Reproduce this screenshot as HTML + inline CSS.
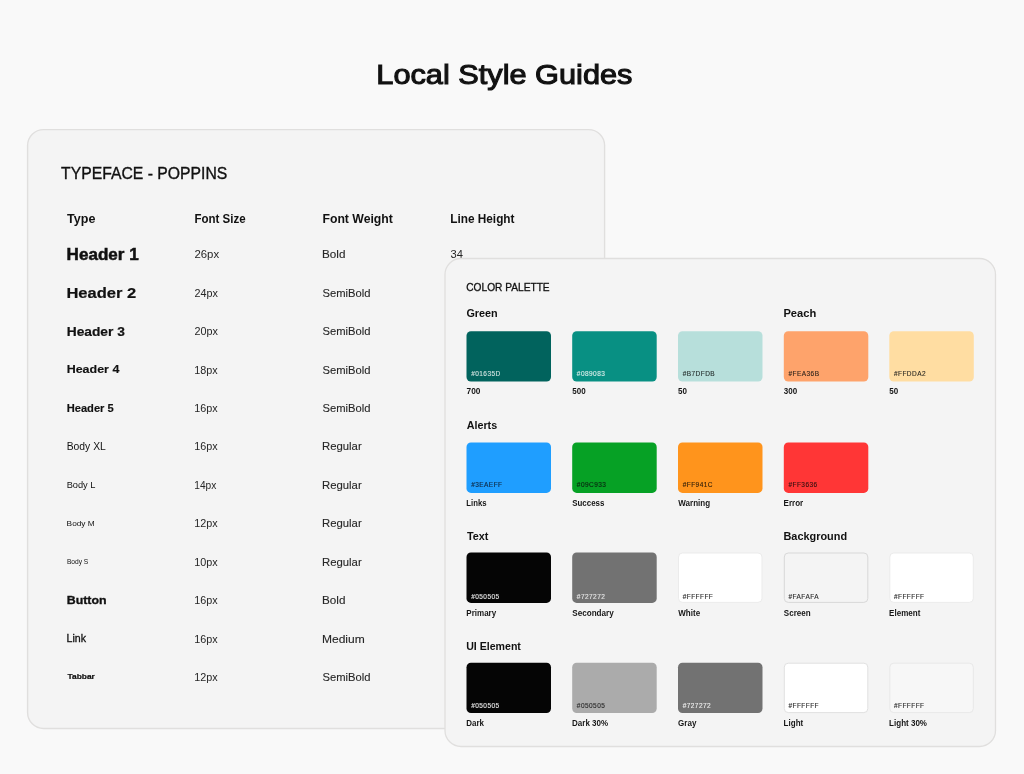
<!DOCTYPE html>
<html><head><meta charset="utf-8"><title>Local Style Guides</title><style>
html,body{margin:0;padding:0;}
body{width:1024px;height:774px;background:#f9f9f9;overflow:hidden;position:relative;}
svg{position:absolute;left:0;top:0;will-change:transform;}
text{font-family:"Liberation Sans",sans-serif;}
</style></head><body>
<svg width="1024" height="774" viewBox="0 0 1024 774">
<rect x="0" y="0" width="1024" height="774" fill="#f9f9f9"/>
<text transform="translate(376.32 83.60) scale(1.0783 1)" font-size="28.5" font-weight="400" fill="#111111" stroke="#111111" stroke-width="1.1">Local Style Guides</text>
<rect x="27.6" y="129.6" width="577" height="598.9" rx="16" fill="#f4f4f4" stroke="#e0dfde" stroke-width="1.4"/>
<text transform="translate(61.03 178.90) scale(0.9675 1)" font-size="16.3" font-weight="400" fill="#111111" stroke="#111111" stroke-width="0.35">TYPEFACE - POPPINS</text>
<text transform="translate(67.04 223.10) scale(1.0453 1)" font-size="12" font-weight="700" fill="#111111">Type</text>
<text transform="translate(194.48 223.20) scale(0.9608 1)" font-size="12" font-weight="700" fill="#111111">Font Size</text>
<text transform="translate(322.43 223.30) scale(1.0212 1)" font-size="12" font-weight="700" fill="#111111">Font Weight</text>
<text transform="translate(450.16 223.30) scale(0.9860 1)" font-size="12" font-weight="700" fill="#111111">Line Height</text>
<text transform="translate(66.62 260.20) scale(1.0284 1)" font-size="16.6" font-weight="700" fill="#111111" stroke="#111111" stroke-width="0.5">Header 1</text>
<text transform="translate(194.46 258.30) scale(1.0742 1)" font-size="10.6" font-weight="400" fill="#262626">26px</text>
<text transform="translate(321.98 258.30) scale(1.0750 1)" font-size="10.9" font-weight="400" fill="#262626" stroke="#262626" stroke-width="0.1">Bold</text>
<text transform="translate(66.43 297.60) scale(1.0740 1)" font-size="15.4" font-weight="700" fill="#111111" stroke="#111111" stroke-width="0.2">Header 2</text>
<text transform="translate(194.49 296.73) scale(1.0189 1)" font-size="10.6" font-weight="400" fill="#262626">24px</text>
<text transform="translate(322.53 296.73) scale(1.0308 1)" font-size="10.9" font-weight="400" fill="#262626" stroke="#262626" stroke-width="0.1">SemiBold</text>
<text transform="translate(66.70 335.60) scale(1.0685 1)" font-size="12.9" font-weight="700" fill="#111111" stroke="#111111" stroke-width="0.2">Header 3</text>
<text transform="translate(194.49 335.16) scale(1.0189 1)" font-size="10.6" font-weight="400" fill="#262626">20px</text>
<text transform="translate(322.53 335.16) scale(1.0308 1)" font-size="10.9" font-weight="400" fill="#262626" stroke="#262626" stroke-width="0.1">SemiBold</text>
<text transform="translate(66.68 373.30) scale(1.0582 1)" font-size="11.8" font-weight="700" fill="#111111" stroke="#111111" stroke-width="0.15">Header 4</text>
<text transform="translate(194.24 373.59) scale(1.0189 1)" font-size="10.6" font-weight="400" fill="#262626">18px</text>
<text transform="translate(322.53 373.59) scale(1.0308 1)" font-size="10.9" font-weight="400" fill="#262626" stroke="#262626" stroke-width="0.1">SemiBold</text>
<text transform="translate(66.69 411.90) scale(1.0503 1)" font-size="10.6" font-weight="700" fill="#111111" stroke="#111111" stroke-width="0.15">Header 5</text>
<text transform="translate(194.24 412.02) scale(1.0189 1)" font-size="10.6" font-weight="400" fill="#262626">16px</text>
<text transform="translate(322.53 412.02) scale(1.0308 1)" font-size="10.9" font-weight="400" fill="#262626" stroke="#262626" stroke-width="0.1">SemiBold</text>
<text transform="translate(66.66 450.30) scale(0.9884 1)" font-size="10.5" font-weight="400" fill="#111111">Body XL</text>
<text transform="translate(194.24 450.45) scale(1.0189 1)" font-size="10.6" font-weight="400" fill="#262626">16px</text>
<text transform="translate(322.01 450.45) scale(1.0405 1)" font-size="10.9" font-weight="400" fill="#262626" stroke="#262626" stroke-width="0.1">Regular</text>
<text transform="translate(66.63 488.10) scale(1.0296 1)" font-size="9.0" font-weight="400" fill="#111111">Body L</text>
<text transform="translate(194.28 488.88) scale(0.9636 1)" font-size="10.6" font-weight="400" fill="#262626">14px</text>
<text transform="translate(322.01 488.88) scale(1.0405 1)" font-size="10.9" font-weight="400" fill="#262626" stroke="#262626" stroke-width="0.1">Regular</text>
<text transform="translate(66.62 526.00) scale(1.0369 1)" font-size="8.0" font-weight="400" fill="#111111">Body M</text>
<text transform="translate(194.24 527.31) scale(1.0189 1)" font-size="10.6" font-weight="400" fill="#262626">12px</text>
<text transform="translate(322.01 527.31) scale(1.0405 1)" font-size="10.9" font-weight="400" fill="#262626" stroke="#262626" stroke-width="0.1">Regular</text>
<text transform="translate(66.90 563.90) scale(0.9928 1)" font-size="6.7" font-weight="400" fill="#111111">Body S</text>
<text transform="translate(194.24 565.74) scale(1.0189 1)" font-size="10.6" font-weight="400" fill="#262626">10px</text>
<text transform="translate(322.01 565.74) scale(1.0405 1)" font-size="10.9" font-weight="400" fill="#262626" stroke="#262626" stroke-width="0.1">Regular</text>
<text transform="translate(66.78 603.90) scale(1.0653 1)" font-size="11.6" font-weight="700" fill="#111111" stroke="#111111" stroke-width="0.35">Button</text>
<text transform="translate(194.24 604.17) scale(1.0189 1)" font-size="10.6" font-weight="400" fill="#262626">16px</text>
<text transform="translate(321.98 604.17) scale(1.0750 1)" font-size="10.9" font-weight="400" fill="#262626" stroke="#262626" stroke-width="0.1">Bold</text>
<text x="66.55" y="642.30" font-size="10.6" font-weight="400" fill="#111111" stroke="#111111" stroke-width="0.3">Link</text>
<text transform="translate(194.24 642.60) scale(1.0189 1)" font-size="10.6" font-weight="400" fill="#262626">16px</text>
<text transform="translate(321.94 642.60) scale(1.1054 1)" font-size="10.9" font-weight="400" fill="#262626" stroke="#262626" stroke-width="0.1">Medium</text>
<text transform="translate(67.50 679.30) scale(1.0500 1)" font-size="8.0" font-weight="700" fill="#111111" stroke="#111111" stroke-width="0.2">Tabbar</text>
<text transform="translate(194.24 681.03) scale(1.0189 1)" font-size="10.6" font-weight="400" fill="#262626">12px</text>
<text transform="translate(322.53 681.03) scale(1.0308 1)" font-size="10.9" font-weight="400" fill="#262626" stroke="#262626" stroke-width="0.1">SemiBold</text>
<text transform="translate(450.47 258.40) scale(1.0545 1)" font-size="10.6" font-weight="400" fill="#262626">34</text>
<rect x="445.0" y="258.5" width="550.5" height="488" rx="16" fill="#f4f4f4" stroke="#e0dfde" stroke-width="1.3"/>
<rect x="466.50" y="331.20" width="84.50" height="50.40" rx="4.5" fill="#01635D"/>
<rect x="572.20" y="331.20" width="84.50" height="50.40" rx="4.5" fill="#089083"/>
<rect x="678.00" y="331.20" width="84.50" height="50.40" rx="4.5" fill="#B7DFDB"/>
<rect x="783.80" y="331.20" width="84.50" height="50.40" rx="4.5" fill="#FEA36B"/>
<rect x="889.30" y="331.20" width="84.50" height="50.40" rx="4.5" fill="#FFDDA2"/>
<rect x="466.50" y="442.50" width="84.50" height="50.40" rx="4.5" fill="#1F9EFF"/>
<rect x="572.20" y="442.50" width="84.50" height="50.40" rx="4.5" fill="#06A125"/>
<rect x="678.00" y="442.50" width="84.50" height="50.40" rx="4.5" fill="#FF941C"/>
<rect x="783.80" y="442.50" width="84.50" height="50.40" rx="4.5" fill="#FF3636"/>
<rect x="466.50" y="552.50" width="84.50" height="50.40" rx="4.5" fill="#050505"/>
<rect x="572.20" y="552.50" width="84.50" height="50.40" rx="4.5" fill="#727272"/>
<rect x="678.50" y="553.00" width="83.50" height="49.40" rx="4.0" fill="#FFFFFF" stroke="#ebebeb" stroke-width="1"/>
<rect x="784.30" y="553.00" width="83.50" height="49.40" rx="4.0" fill="#F4F4F4" stroke="#d8d8d8" stroke-width="1"/>
<rect x="889.80" y="553.00" width="83.50" height="49.40" rx="4.0" fill="#FFFFFF" stroke="#ebebeb" stroke-width="1"/>
<rect x="466.50" y="662.70" width="84.50" height="50.40" rx="4.5" fill="#050505"/>
<rect x="572.20" y="662.70" width="84.50" height="50.40" rx="4.5" fill="#ABABAB"/>
<rect x="678.00" y="662.70" width="84.50" height="50.40" rx="4.5" fill="#727272"/>
<rect x="784.30" y="663.20" width="83.50" height="49.40" rx="4.0" fill="#FFFFFF" stroke="#e0e0e0" stroke-width="1"/>
<rect x="889.80" y="663.20" width="83.50" height="49.40" rx="4.0" fill="#F7F7F7" stroke="#e8e8e8" stroke-width="1"/>
<text transform="translate(466.27 290.80) scale(0.9677 1)" font-size="10.5" font-weight="400" fill="#111111" stroke="#111111" stroke-width="0.3">COLOR PALETTE</text>
<text transform="translate(466.39 317.20) scale(1.0237 1)" font-size="10.6" font-weight="700" fill="#111111">Green</text>
<text transform="translate(783.41 317.20) scale(1.0521 1)" font-size="10.6" font-weight="700" fill="#111111">Peach</text>
<text transform="translate(466.65 428.60) scale(1.0154 1)" font-size="10.6" font-weight="700" fill="#111111">Alerts</text>
<text transform="translate(466.90 539.90) scale(1.0240 1)" font-size="10.6" font-weight="700" fill="#111111">Text</text>
<text transform="translate(783.43 539.90) scale(1.0307 1)" font-size="10.6" font-weight="700" fill="#111111">Background</text>
<text x="466.15" y="650.00" font-size="10.6" font-weight="700" fill="#111111">UI Element</text>
<text x="471.16" y="375.80" font-size="6.5" font-weight="400" fill="#cfe2df" letter-spacing="0.450" stroke="#cfe2df" stroke-width="0.12">#01635D</text>
<text transform="translate(466.55 394.10) scale(1.0154 1)" font-size="8.2" font-weight="700" fill="#161616">700</text>
<text x="576.86" y="375.80" font-size="6.5" font-weight="400" fill="#d6ece8" letter-spacing="0.450" stroke="#d6ece8" stroke-width="0.12">#089083</text>
<text transform="translate(572.26 394.10) scale(0.9780 1)" font-size="8.2" font-weight="700" fill="#161616">500</text>
<text x="682.66" y="375.80" font-size="6.5" font-weight="400" fill="#26302f" letter-spacing="0.450" stroke="#26302f" stroke-width="0.12">#B7DFDB</text>
<text transform="translate(678.06 394.10) scale(0.9780 1)" font-size="8.2" font-weight="700" fill="#161616">50</text>
<text x="788.46" y="375.80" font-size="6.5" font-weight="400" fill="#2e241c" letter-spacing="0.450" stroke="#2e241c" stroke-width="0.12">#FEA36B</text>
<text transform="translate(783.86 394.10) scale(0.9780 1)" font-size="8.2" font-weight="700" fill="#161616">300</text>
<text x="893.96" y="375.80" font-size="6.5" font-weight="400" fill="#2e2b24" letter-spacing="0.450" stroke="#2e2b24" stroke-width="0.12">#FFDDA2</text>
<text transform="translate(889.36 394.10) scale(0.9780 1)" font-size="8.2" font-weight="700" fill="#161616">50</text>
<text x="471.16" y="487.00" font-size="6.5" font-weight="400" fill="#0f2740" letter-spacing="0.450" stroke="#0f2740" stroke-width="0.12">#3EAEFF</text>
<text transform="translate(466.33 505.90) scale(0.9415 1)" font-size="8.2" font-weight="700" fill="#161616">Links</text>
<text x="576.86" y="487.00" font-size="6.5" font-weight="400" fill="#0a2410" letter-spacing="0.450" stroke="#0a2410" stroke-width="0.12">#09C933</text>
<text transform="translate(572.26 505.90) scale(0.9679 1)" font-size="8.2" font-weight="700" fill="#161616">Success</text>
<text x="682.66" y="487.00" font-size="6.5" font-weight="400" fill="#33200a" letter-spacing="0.450" stroke="#33200a" stroke-width="0.12">#FF941C</text>
<text transform="translate(678.30 505.90) scale(0.9780 1)" font-size="8.2" font-weight="700" fill="#161616">Warning</text>
<text x="788.46" y="487.00" font-size="6.5" font-weight="400" fill="#331010" letter-spacing="0.450" stroke="#331010" stroke-width="0.12">#FF3636</text>
<text transform="translate(783.61 505.90) scale(0.9780 1)" font-size="8.2" font-weight="700" fill="#161616">Error</text>
<text x="471.16" y="598.60" font-size="6.5" font-weight="400" fill="#e6e6e6" letter-spacing="0.450" stroke="#e6e6e6" stroke-width="0.12">#050505</text>
<text transform="translate(466.31 615.80) scale(0.9780 1)" font-size="8.2" font-weight="700" fill="#161616">Primary</text>
<text x="576.86" y="598.60" font-size="6.5" font-weight="400" fill="#e6e6e6" letter-spacing="0.450" stroke="#e6e6e6" stroke-width="0.12">#727272</text>
<text transform="translate(572.25 615.80) scale(0.9904 1)" font-size="8.2" font-weight="700" fill="#161616">Secondary</text>
<text x="682.66" y="598.60" font-size="6.5" font-weight="400" fill="#2a2a2a" letter-spacing="0.450" stroke="#2a2a2a" stroke-width="0.12">#FFFFFF</text>
<text transform="translate(678.30 615.80) scale(0.9780 1)" font-size="8.2" font-weight="700" fill="#161616">White</text>
<text x="788.46" y="598.60" font-size="6.5" font-weight="400" fill="#2a2a2a" letter-spacing="0.450" stroke="#2a2a2a" stroke-width="0.12">#FAFAFA</text>
<text transform="translate(783.86 615.80) scale(0.9780 1)" font-size="8.2" font-weight="700" fill="#161616">Screen</text>
<text x="893.96" y="598.60" font-size="6.5" font-weight="400" fill="#2a2a2a" letter-spacing="0.450" stroke="#2a2a2a" stroke-width="0.12">#FFFFFF</text>
<text transform="translate(889.11 615.80) scale(0.9780 1)" font-size="8.2" font-weight="700" fill="#161616">Element</text>
<text x="471.16" y="708.40" font-size="6.5" font-weight="400" fill="#e6e6e6" letter-spacing="0.450" stroke="#e6e6e6" stroke-width="0.12">#050505</text>
<text transform="translate(466.31 725.90) scale(0.9746 1)" font-size="8.2" font-weight="700" fill="#161616">Dark</text>
<text x="576.86" y="708.40" font-size="6.5" font-weight="400" fill="#2a2a2a" letter-spacing="0.450" stroke="#2a2a2a" stroke-width="0.12">#050505</text>
<text transform="translate(572.01 725.90) scale(0.9780 1)" font-size="8.2" font-weight="700" fill="#161616">Dark 30%</text>
<text x="682.66" y="708.40" font-size="6.5" font-weight="400" fill="#eeeeee" letter-spacing="0.450" stroke="#eeeeee" stroke-width="0.12">#727272</text>
<text transform="translate(678.06 725.90) scale(0.9780 1)" font-size="8.2" font-weight="700" fill="#161616">Gray</text>
<text x="788.46" y="708.40" font-size="6.5" font-weight="400" fill="#2a2a2a" letter-spacing="0.450" stroke="#2a2a2a" stroke-width="0.12">#FFFFFF</text>
<text transform="translate(783.61 725.90) scale(0.9780 1)" font-size="8.2" font-weight="700" fill="#161616">Light</text>
<text x="893.96" y="708.40" font-size="6.5" font-weight="400" fill="#2a2a2a" letter-spacing="0.450" stroke="#2a2a2a" stroke-width="0.12">#FFFFFF</text>
<text transform="translate(889.11 725.90) scale(0.9780 1)" font-size="8.2" font-weight="700" fill="#161616">Light 30%</text>
</svg>
</body></html>
